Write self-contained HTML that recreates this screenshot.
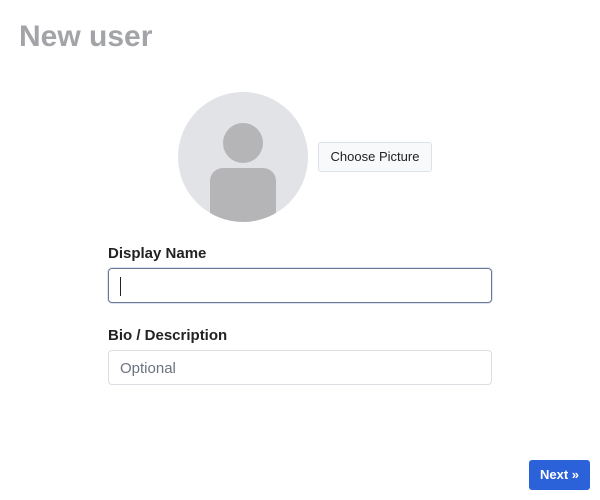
<!DOCTYPE html>
<html><head><style>
body{margin:0;width:600px;height:500px;background:#fff;font-family:"Liberation Sans",sans-serif;position:relative;overflow:hidden}
h1{position:absolute;left:19px;top:19px;margin:0;font-size:30px;font-weight:bold;color:#a3a4a8;line-height:36px}
.av{position:absolute;left:178px;top:92px;width:130px;height:130px;border-radius:50%;background:#e2e3e6;overflow:hidden}
.head{position:absolute;left:45px;top:31px;width:40px;height:40px;border-radius:50%;background:#b5b5b7}
.body{position:absolute;left:32px;top:76px;width:66px;height:60px;border-radius:13px 13px 0 0;background:#b5b5b7}
.cp{position:absolute;left:318px;top:142px;width:112px;height:28px;border:1px solid #dde2e6;background:#f7f9fa;border-radius:3px;font-size:13px;color:#222;text-align:center;line-height:28px}
.lbl{position:absolute;left:108px;font-size:15px;font-weight:bold;color:#222}
.in{position:absolute;left:108px;width:382px;height:33px;border:1px solid #dadde2;border-radius:4px;box-sizing:content-box}
.f{border-color:#6b7894;box-shadow:0 0 0 1px #dde3ee}
.caret{position:absolute;left:11px;top:8px;width:1px;height:19px;background:#222}
.ph{position:absolute;left:11px;top:9px;font-size:15px;color:#6b7280}
.nx{position:absolute;left:529px;top:460px;width:61px;height:30px;background:#2b62d9;border-radius:3px;color:#fff;font-size:13px;font-weight:bold;text-align:center;line-height:30px}
</style></head><body>
<h1>New user</h1>
<div class="av"><div class="head"></div><div class="body"></div></div>
<div class="cp">Choose Picture</div>
<div class="lbl" style="top:245px">Display Name</div>
<div class="in f" style="top:268px"><div class="caret"></div></div>
<div class="lbl" style="top:327px">Bio / Description</div>
<div class="in" style="top:350px"><div class="ph">Optional</div></div>
<div class="nx">Next »</div>
</body></html>
